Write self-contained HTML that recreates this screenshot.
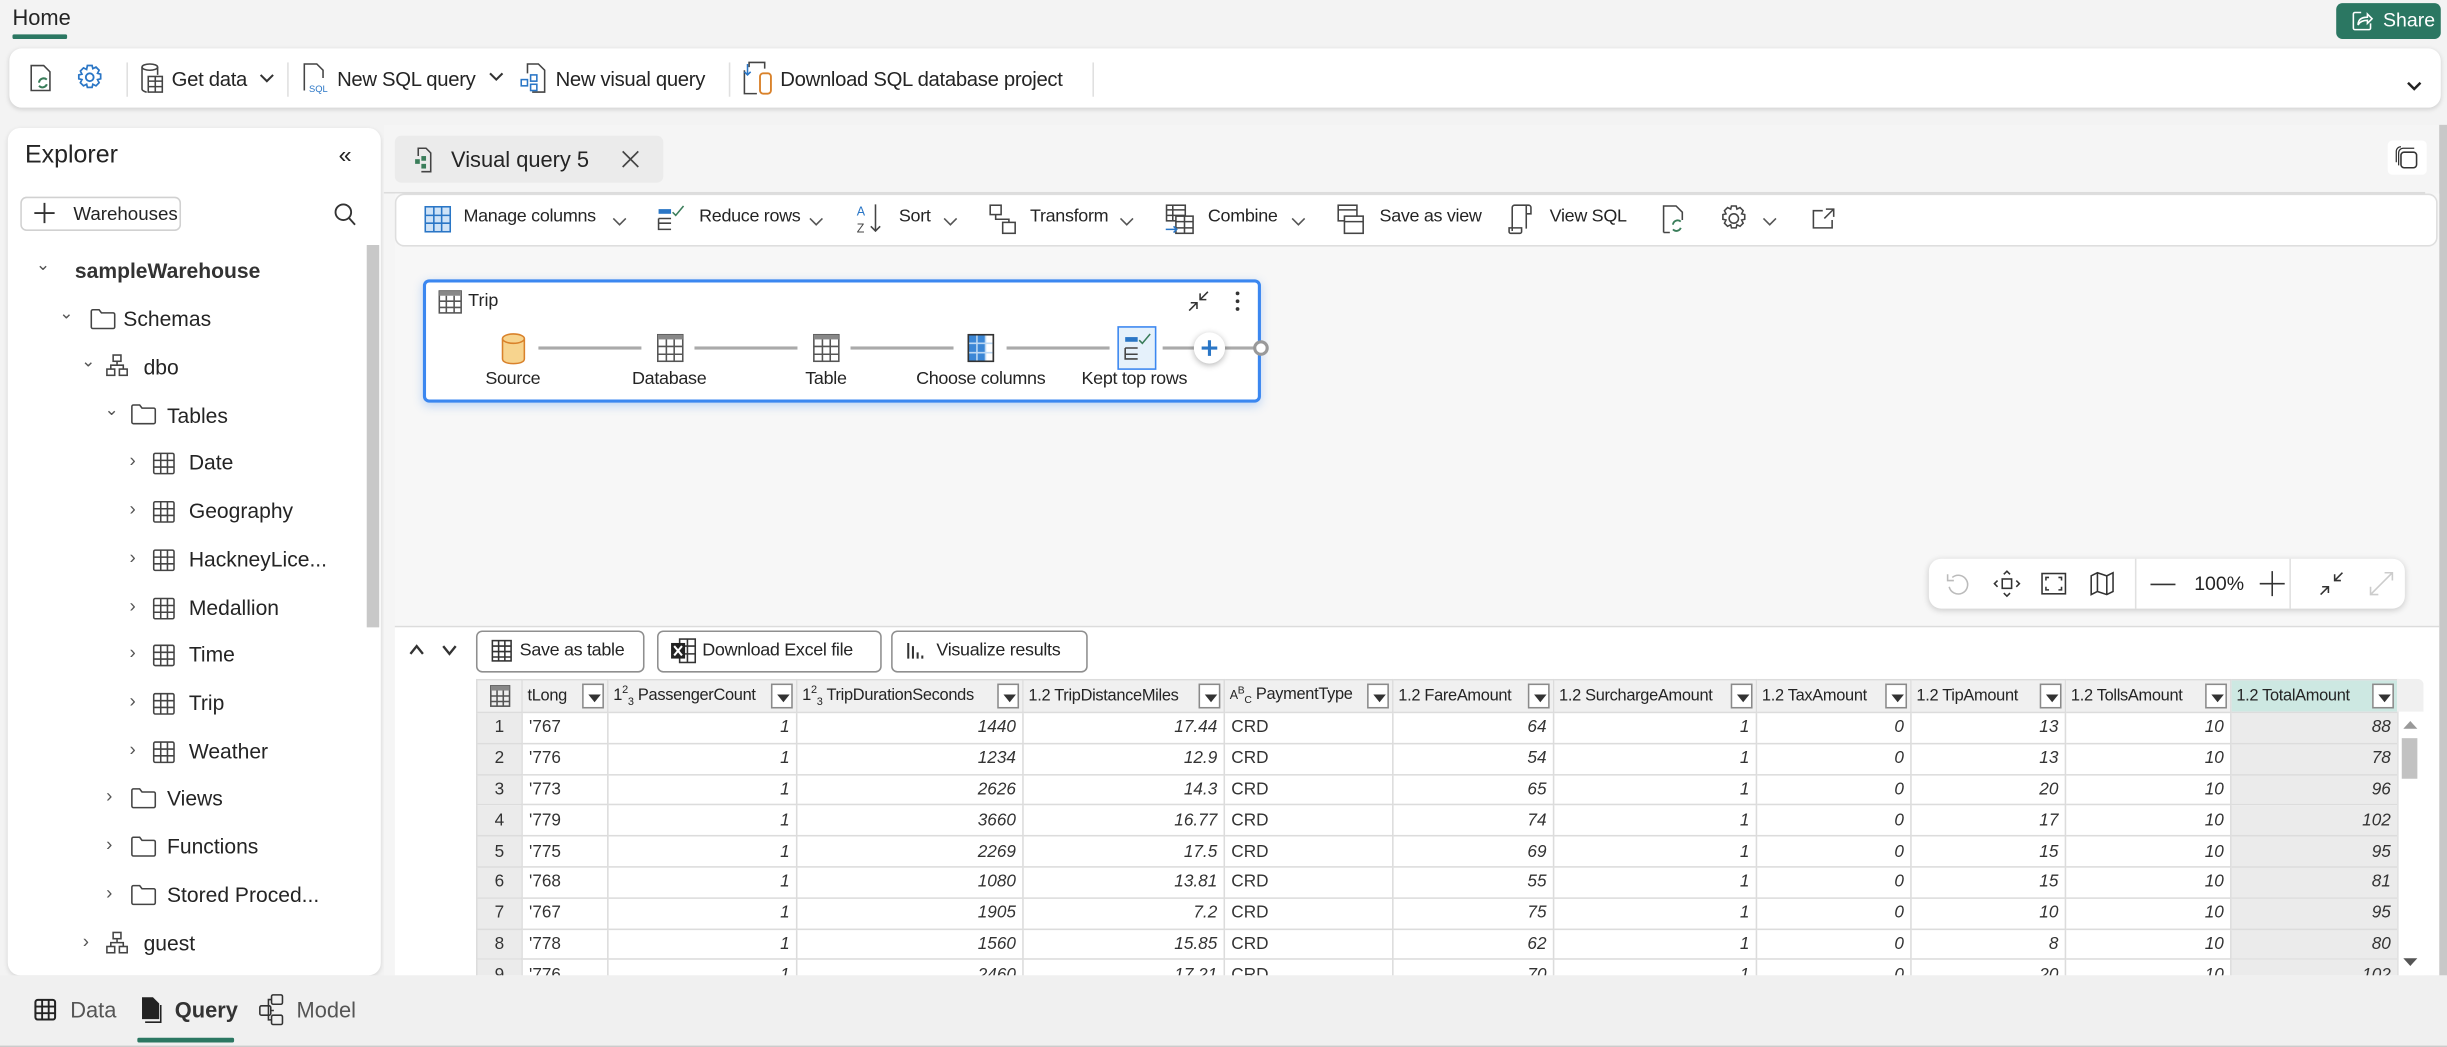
<!DOCTYPE html>
<html><head><meta charset="utf-8">
<style>
*{box-sizing:border-box;margin:0;padding:0}
html,body{width:2447px;height:1047px;overflow:hidden;background:#f3f3f3}
#s{position:absolute;left:0;top:0;width:1568px;height:671px;transform:scale(1.56059);transform-origin:0 0;font-family:"Liberation Sans",sans-serif;color:#242424;background:#f3f3f3}
.a{position:absolute}
.t{position:absolute;white-space:nowrap}
svg{position:absolute;overflow:visible}
.sep{position:absolute;width:1px;background:#e0e0e0}
.tree{font-size:13.5px}
.tb{font-size:13px;letter-spacing:-.2px}
.tb2{font-size:11.5px;letter-spacing:-.2px}
table{border-collapse:collapse;table-layout:fixed;font-size:11px}
td,th{border:1px solid #dcdcdc;height:19.8px;padding:0 4px;white-space:nowrap;overflow:hidden}
th{height:21px;background:#f0f0f0;font-weight:normal;text-align:left;position:relative;padding-left:3px;font-size:10.5px;letter-spacing:-.2px}
td{text-align:right;font-style:italic;color:#333}
td.n{background:#ebebeb;text-align:center;font-style:normal}
td.l{text-align:left;font-style:normal}
td.tot{background:#ebebeb}
.dd{position:absolute;right:2px;top:2px;width:14px;height:16px;border:1px solid #8a8a8a;background:#fff}
.dd:after{content:"";position:absolute;left:3px;top:6px;border-left:4px solid transparent;border-right:4px solid transparent;border-top:5px solid #333}
.btn{position:absolute;border:1px solid #8f8f8f;border-radius:4px;background:#fff;font-size:12px;height:27px;top:404px}
.bt{font-size:11.5px;letter-spacing:-.2px}
</style></head><body><div id="s">

<div class="t" style="left:8px;top:3px;font-size:14px">Home</div>
<div class="a" style="left:8px;top:22px;width:35px;height:2.5px;background:#2b7762;border-radius:1px"></div>
<div class="a" style="left:1497px;top:2px;width:67px;height:23px;background:#2b7762;border-radius:4px"></div>
<svg style="left:1507px;top:7px" width="14" height="13" viewBox="0 0 14 13"><path d="M6 1H2a1 1 0 0 0-1 1v9a1 1 0 0 0 1 1h9a1 1 0 0 0 1-1V8" fill="none" stroke="#fff" stroke-width="1"/><path d="M4 9c0-4 3-5 6-5V2l3 3-3 3V6c-3 0-5 1-6 3z" fill="none" stroke="#fff" stroke-width="1"/></svg>
<div class="t" style="left:1527px;top:6px;font-size:12.5px;color:#fff">Share</div>

<div class="a" style="left:6px;top:31px;width:1558px;height:38px;background:#fff;border-radius:8px;box-shadow:0 1px 3px rgba(0,0,0,.15)"></div>
<svg style="left:19px;top:41px" width="16" height="18" viewBox="0 0 16 18"><path d="M1 1h8l4 4v12H1z" fill="none" stroke="#444"/><path d="M6 12a3 3 0 0 1 5-2M11 13a3 3 0 0 1-5 1" fill="none" stroke="#3a7d5a" stroke-width="1.3"/></svg>
<svg style="left:49px;top:41px" width="17" height="17" viewBox="0 0 17 17"><circle cx="8.5" cy="8.5" r="2.5" fill="none" stroke="#2a76c6" stroke-width="1.2"/><path d="M7 1h3l.5 2 2-1 2 2-1 2 2 .5v3l-2 .5 1 2-2 2-2-1-.5 2H7l-.5-2-2 1-2-2 1-2-2-.5V7l2-.5-1-2 2-2 2 1z" fill="none" stroke="#2a76c6" stroke-width="1.1"/></svg>
<div class="sep" style="left:81px;top:40px;height:22px"></div>
<svg style="left:89px;top:40px" width="16" height="20" viewBox="0 0 16 20"><ellipse cx="7" cy="3" rx="5" ry="2" fill="none" stroke="#444"/><path d="M2 3v14c0 1 2 2 3 2M12 3v5" fill="none" stroke="#444"/><rect x="6" y="9" width="9" height="10" fill="#fff" stroke="#444"/><path d="M6 12h9M6 15.5h9M10.5 9v10" stroke="#444"/></svg>
<div class="t tb" style="left:110px;top:43px">Get data</div>
<svg style="left:166px;top:47px" width="10" height="6"><path d="M1 1l4 4 4-4" fill="none" stroke="#333" stroke-width="1.3"/></svg>
<div class="sep" style="left:184px;top:40px;height:22px"></div>
<svg style="left:193px;top:40px" width="18" height="20" viewBox="0 0 18 20"><path d="M2 18V1h8l4 4v5" fill="none" stroke="#444"/><text x="5" y="19" font-size="6" fill="#2a76c6" font-family="Liberation Sans">SQL</text></svg>
<div class="t tb" style="left:216px;top:43px">New SQL query</div>
<svg style="left:313px;top:46px" width="10" height="6"><path d="M1 1l4 4 4-4" fill="none" stroke="#333" stroke-width="1.3"/></svg>
<svg style="left:333px;top:40px" width="18" height="20" viewBox="0 0 18 20"><path d="M5 7V1h7l4 4v14H8" fill="none" stroke="#444"/><rect x="1" y="11" width="4" height="4" fill="none" stroke="#2a76c6"/><rect x="7" y="8" width="4" height="4" fill="none" stroke="#2a76c6"/><rect x="7" y="14" width="4" height="4" fill="none" stroke="#2a76c6"/></svg>
<div class="t tb" style="left:356px;top:43px">New visual query</div>
<div class="sep" style="left:467px;top:40px;height:22px"></div>
<svg style="left:476px;top:39px" width="20" height="22" viewBox="0 0 20 22"><path d="M4 4V1h10v4" fill="none" stroke="#444"/><path d="M1 6v15h8" fill="none" stroke="#444"/><path d="M3 2v7M1 7l2 2 2-2" fill="none" stroke="#2a76c6"/><rect x="11" y="8" width="7" height="13" rx="2" fill="none" stroke="#d9822b" stroke-width="1.2"/></svg>
<div class="t tb" style="left:500px;top:43px">Download SQL database project</div>
<div class="sep" style="left:700px;top:40px;height:22px"></div>
<svg style="left:1542px;top:52px" width="10" height="6"><path d="M1 1l4 4 4-4" fill="none" stroke="#222" stroke-width="1.6"/></svg>

<div class="a" style="left:5px;top:82px;width:239px;height:543px;background:#fff;border-radius:8px;box-shadow:0 1px 3px rgba(0,0,0,.12)"></div>
<div class="a" style="left:235px;top:157px;width:8px;height:245px;background:#c8c8c8"></div>
<div class="t" style="left:16px;top:91px;font-size:16px">Explorer</div>
<div class="t" style="left:217px;top:91px;font-size:15px">«</div>
<div class="a" style="left:13px;top:126px;width:103px;height:22px;border:1px solid #d1d1d1;border-radius:4px"></div>
<svg style="left:22px;top:130px" width="13" height="13"><path d="M6.5 0v13M0 6.5h13" stroke="#333" stroke-width="1.2"/></svg>
<div class="t" style="left:47px;top:130px;font-size:12px">Warehouses</div>
<svg style="left:214px;top:130px" width="14" height="15"><circle cx="6" cy="6" r="5" fill="none" stroke="#333" stroke-width="1.2"/><path d="M9.5 9.5l4 4.5" stroke="#333" stroke-width="1.2"/></svg>

<div class="tree">
<div class="t" style="left:23px;top:163px;font-size:11px;color:#555">&#8964;</div>
<div class="t" style="left:48px;top:166px;font-weight:bold;color:#333">sampleWarehouse</div>
<div class="t" style="left:38px;top:194px;font-size:11px;color:#555">&#8964;</div>
<svg style="left:58px;top:198px" width="16" height="13"><path d="M.5 1.5a1 1 0 0 1 1-1h4l1.5 2h7.5a1 1 0 0 1 1 1V11.5a1 1 0 0 1-1 1h-13a1 1 0 0 1-1-1z" fill="none" stroke="#444"/></svg>
<div class="t" style="left:79px;top:197px">Schemas</div>
<div class="t" style="left:52px;top:225px;font-size:11px;color:#555">&#8964;</div>
<svg style="left:68px;top:227px" width="14" height="14"><rect x="4.5" y=".5" width="5" height="4" fill="none" stroke="#444"/><rect x=".5" y="9.5" width="5" height="4" fill="none" stroke="#444"/><rect x="8.5" y="9.5" width="5" height="4" fill="none" stroke="#444"/><path d="M7 4.5v2.5M3 9.5V7h8v2.5" fill="none" stroke="#444"/></svg>
<div class="t" style="left:92px;top:228px">dbo</div>
<div class="t" style="left:67px;top:256px;font-size:11px;color:#555">&#8964;</div>
<svg style="left:84px;top:259px" width="16" height="13"><path d="M.5 1.5a1 1 0 0 1 1-1h4l1.5 2h7.5a1 1 0 0 1 1 1V11.5a1 1 0 0 1-1 1h-13a1 1 0 0 1-1-1z" fill="none" stroke="#444"/></svg>
<div class="t" style="left:107px;top:259px">Tables</div>

<div class="t" style="left:83px;top:288px;color:#555;font-size:12px">›</div><svg style="left:98px;top:290px" width="14" height="14"><rect x=".5" y=".5" width="13" height="13" rx="1" fill="none" stroke="#444"/><path d="M.5 5h13M.5 9.3h13M5 .5v13M9.3 .5v13" stroke="#444"/></svg><div class="t" style="left:121px;top:289px">Date</div>
<div class="t" style="left:83px;top:319px;color:#555;font-size:12px">›</div><svg style="left:98px;top:321px" width="14" height="14"><rect x=".5" y=".5" width="13" height="13" rx="1" fill="none" stroke="#444"/><path d="M.5 5h13M.5 9.3h13M5 .5v13M9.3 .5v13" stroke="#444"/></svg><div class="t" style="left:121px;top:320px">Geography</div>
<div class="t" style="left:83px;top:350px;color:#555;font-size:12px">›</div><svg style="left:98px;top:352px" width="14" height="14"><rect x=".5" y=".5" width="13" height="13" rx="1" fill="none" stroke="#444"/><path d="M.5 5h13M.5 9.3h13M5 .5v13M9.3 .5v13" stroke="#444"/></svg><div class="t" style="left:121px;top:351px">HackneyLice...</div>
<div class="t" style="left:83px;top:381px;color:#555;font-size:12px">›</div><svg style="left:98px;top:383px" width="14" height="14"><rect x=".5" y=".5" width="13" height="13" rx="1" fill="none" stroke="#444"/><path d="M.5 5h13M.5 9.3h13M5 .5v13M9.3 .5v13" stroke="#444"/></svg><div class="t" style="left:121px;top:382px">Medallion</div>
<div class="t" style="left:83px;top:411px;color:#555;font-size:12px">›</div><svg style="left:98px;top:413px" width="14" height="14"><rect x=".5" y=".5" width="13" height="13" rx="1" fill="none" stroke="#444"/><path d="M.5 5h13M.5 9.3h13M5 .5v13M9.3 .5v13" stroke="#444"/></svg><div class="t" style="left:121px;top:412px">Time</div>
<div class="t" style="left:83px;top:442px;color:#555;font-size:12px">›</div><svg style="left:98px;top:444px" width="14" height="14"><rect x=".5" y=".5" width="13" height="13" rx="1" fill="none" stroke="#444"/><path d="M.5 5h13M.5 9.3h13M5 .5v13M9.3 .5v13" stroke="#444"/></svg><div class="t" style="left:121px;top:443px">Trip</div>
<div class="t" style="left:83px;top:473px;color:#555;font-size:12px">›</div><svg style="left:98px;top:475px" width="14" height="14"><rect x=".5" y=".5" width="13" height="13" rx="1" fill="none" stroke="#444"/><path d="M.5 5h13M.5 9.3h13M5 .5v13M9.3 .5v13" stroke="#444"/></svg><div class="t" style="left:121px;top:474px">Weather</div>
<div class="t" style="left:68px;top:503px;color:#555;font-size:12px">›</div><svg style="left:84px;top:505px" width="16" height="13"><path d="M.5 1.5a1 1 0 0 1 1-1h4l1.5 2h7.5a1 1 0 0 1 1 1V11.5a1 1 0 0 1-1 1h-13a1 1 0 0 1-1-1z" fill="none" stroke="#444"/></svg><div class="t" style="left:107px;top:504px">Views</div>
<div class="t" style="left:68px;top:534px;color:#555;font-size:12px">›</div><svg style="left:84px;top:536px" width="16" height="13"><path d="M.5 1.5a1 1 0 0 1 1-1h4l1.5 2h7.5a1 1 0 0 1 1 1V11.5a1 1 0 0 1-1 1h-13a1 1 0 0 1-1-1z" fill="none" stroke="#444"/></svg><div class="t" style="left:107px;top:535px">Functions</div>
<div class="t" style="left:68px;top:565px;color:#555;font-size:12px">›</div><svg style="left:84px;top:567px" width="16" height="13"><path d="M.5 1.5a1 1 0 0 1 1-1h4l1.5 2h7.5a1 1 0 0 1 1 1V11.5a1 1 0 0 1-1 1h-13a1 1 0 0 1-1-1z" fill="none" stroke="#444"/></svg><div class="t" style="left:107px;top:566px">Stored Proced...</div>
<div class="t" style="left:53px;top:596px;color:#555;font-size:12px">›</div><svg style="left:68px;top:597px" width="14" height="14"><rect x="4.5" y=".5" width="5" height="4" fill="none" stroke="#444"/><rect x=".5" y="9.5" width="5" height="4" fill="none" stroke="#444"/><rect x="8.5" y="9.5" width="5" height="4" fill="none" stroke="#444"/><path d="M7 4.5v2.5M3 9.5V7h8v2.5" fill="none" stroke="#444"/></svg><div class="t" style="left:92px;top:597px">guest</div>
</div>

<div class="a" style="left:246px;top:80px;width:1322px;height:545px;background:#f5f5f5"></div>
<div class="a" style="left:253px;top:87px;width:172px;height:30px;background:#ebebeb;border-radius:4px"></div>
<svg style="left:265px;top:94px" width="12" height="17" viewBox="0 0 12 17"><path d="M3 6V1h5l3 3v12H5" fill="none" stroke="#444"/><rect x="1" y="8" width="3" height="3" fill="#3a7d5a"/><rect x="5" y="6" width="3" height="3" fill="#3a7d5a"/><rect x="5" y="11" width="3" height="3" fill="#3a7d5a"/></svg>
<div class="t" style="left:289px;top:94px;font-size:14px">Visual query 5</div>
<svg style="left:398px;top:96px" width="12" height="12"><path d="M1 1l10 10M11 1L1 11" stroke="#444" stroke-width="1.1"/></svg>
<div class="a" style="left:1530px;top:90px;width:25px;height:22px;background:#fff;border-radius:3px"></div>
<svg style="left:1534px;top:93px" width="16" height="16"><rect x="4.5" y="4.5" width="10" height="10" rx="2" fill="none" stroke="#333"/><path d="M3 13V5a3 3 0 0 1 3-3h7M1.5 11V4a3 3 0 0 1 3-3" fill="none" stroke="#333" stroke-width=".8"/></svg>
<div class="a" style="left:246px;top:123px;width:1308px;height:1px;background:#dcdcdc"></div>
<div class="a" style="left:1563px;top:80px;width:5px;height:545px;background:#c8c8c8"></div>

<div class="a" style="left:253px;top:124px;width:1310px;height:278px;background:#f7f7f7"></div>
<div class="a" style="left:253px;top:124px;width:1309px;height:34px;background:#fff;border:1px solid #dedede;border-radius:6px"></div>
<svg style="left:272px;top:132px" width="17" height="17"><rect x=".5" y=".5" width="16" height="16" fill="#cfe3f7" stroke="#2a76c6"/><path d="M.5 6h16M.5 11h16M6 .5v16M11 .5v16" stroke="#2a76c6"/></svg>
<div class="t tb2" style="left:297px;top:133px">Manage columns</div>
<svg style="left:392px;top:139px" width="10" height="6"><path d="M1 1l4 4 4-4" fill="none" stroke="#555"/></svg>
<svg style="left:421px;top:131px" width="18" height="18"><rect x="1" y="3" width="8" height="3" fill="#2a76c6"/><path d="M1 9h8M1 12h8M1 9v7h8" fill="none" stroke="#444"/><path d="M10 5l2 2 5-6" fill="none" stroke="#3a7d5a"/></svg>
<div class="t tb2" style="left:448px;top:133px">Reduce rows</div>
<svg style="left:518px;top:139px" width="10" height="6"><path d="M1 1l4 4 4-4" fill="none" stroke="#555"/></svg>
<svg style="left:549px;top:130px" width="18" height="20"><text x="0" y="8" font-size="8" fill="#2a76c6" font-family="Liberation Sans">A</text><text x="0" y="19" font-size="8" fill="#444" font-family="Liberation Sans">Z</text><path d="M12 1v17M9 15l3 3 3-3" fill="none" stroke="#444"/></svg>
<div class="t tb2" style="left:576px;top:133px">Sort</div>
<svg style="left:604px;top:139px" width="10" height="6"><path d="M1 1l4 4 4-4" fill="none" stroke="#555"/></svg>
<svg style="left:634px;top:131px" width="18" height="19"><rect x=".5" y=".5" width="7" height="6" fill="none" stroke="#444"/><rect x="8.5" y="11.5" width="8" height="7" fill="none" stroke="#444"/><path d="M4 6.5v3h8.5v2" fill="none" stroke="#444"/></svg>
<div class="t tb2" style="left:660px;top:133px">Transform</div>
<svg style="left:717px;top:139px" width="10" height="6"><path d="M1 1l4 4 4-4" fill="none" stroke="#555"/></svg>
<svg style="left:747px;top:131px" width="19" height="20"><rect x=".5" y=".5" width="12" height="10" fill="none" stroke="#444"/><path d="M.5 3.5h12M.5 7h12M4.5 .5v10" stroke="#444"/><rect x="6.5" y="7.5" width="11" height="11" fill="#fff" stroke="#444"/><path d="M6.5 11h11M6.5 15h11M12 7.5v11" stroke="#444"/><path d="M0 16h7M5 14l2 2-2 2" fill="none" stroke="#2a76c6"/></svg>
<div class="t tb2" style="left:774px;top:133px">Combine</div>
<svg style="left:827px;top:139px" width="10" height="6"><path d="M1 1l4 4 4-4" fill="none" stroke="#555"/></svg>
<svg style="left:857px;top:131px" width="18" height="19"><rect x=".5" y=".5" width="12" height="10" fill="none" stroke="#444"/><path d="M.5 3.5h12" stroke="#444"/><rect x="4.5" y="7.5" width="12" height="11" fill="#fff" stroke="#444"/><path d="M4.5 11h12" stroke="#444"/></svg>
<div class="t tb2" style="left:884px;top:133px">Save as view</div>
<svg style="left:966px;top:131px" width="16" height="19"><path d="M3 17V2a1.5 1.5 0 0 1 1.5-1.5h9A1.5 1.5 0 0 1 15 2v4h-3M1 15h8v2.5a1 1 0 0 1-1 1H2a1 1 0 0 1-1-1z" fill="none" stroke="#444"/><path d="M12 .5v15" stroke="#444"/></svg>
<div class="t tb2" style="left:993px;top:133px">View SQL</div>
<svg style="left:1065px;top:131px" width="16" height="19"><path d="M1 18V1h8l4 4v5M1 18h4" fill="none" stroke="#444"/><path d="M7 13a3 3 0 0 1 5-2M12 15a3 3 0 0 1-5 1" fill="none" stroke="#3a7d5a" stroke-width="1.2"/></svg>
<svg style="left:1102px;top:131px" width="18" height="18"><circle cx="9" cy="9" r="3" fill="none" stroke="#444"/><path d="M7.5 1h3l.5 2 2-1 2 2-1 2 2 .5v3l-2 .5 1 2-2 2-2-1-.5 2h-3l-.5-2-2 1-2-2 1-2-2-.5v-3l2-.5-1-2 2-2 2 1z" fill="none" stroke="#444"/></svg>
<svg style="left:1129px;top:139px" width="10" height="6"><path d="M1 1l4 4 4-4" fill="none" stroke="#555"/></svg>
<svg style="left:1161px;top:133px" width="15" height="14"><path d="M7 2H1v11h12V8M9 1h5v5M14 1L8 7" fill="none" stroke="#444"/></svg>

<div class="a" style="left:271px;top:179px;width:537px;height:79px;background:#fff;border:2px solid #3b87f0;border-radius:4px;box-shadow:0 2px 6px rgba(59,135,240,.3)"></div>
<svg style="left:281px;top:186px" width="15" height="15"><rect x=".5" y=".5" width="14" height="14" fill="none" stroke="#555"/><rect x=".5" y=".5" width="14" height="3" fill="#888"/><path d="M.5 7h14M.5 11h14M5 3.5v11M10 3.5v11" stroke="#555"/></svg>
<div class="t" style="left:300px;top:187px;font-size:11.5px">Trip</div>
<svg style="left:761px;top:186px" width="14" height="14"><path d="M1 13l5-5M2 8h4v4M13 1L8 6M8 2v4h4" fill="none" stroke="#333"/></svg>
<svg style="left:791px;top:186px" width="4" height="14"><circle cx="2" cy="2" r="1.2" fill="#333"/><circle cx="2" cy="7" r="1.2" fill="#333"/><circle cx="2" cy="12" r="1.2" fill="#333"/></svg>
<div class="a" style="left:345px;top:222px;width:66px;height:1.5px;background:#aaa"></div>
<div class="a" style="left:445px;top:222px;width:66px;height:1.5px;background:#aaa"></div>
<div class="a" style="left:545px;top:222px;width:66px;height:1.5px;background:#aaa"></div>
<div class="a" style="left:645px;top:222px;width:66px;height:1.5px;background:#aaa"></div>
<div class="a" style="left:745px;top:222px;width:60px;height:1.5px;background:#aaa"></div>
<svg style="left:321px;top:213px" width="16" height="21"><path d="M1 4v13c0 2 3 3 7 3s7-1 7-3V4" fill="#f7d48e" stroke="#d9822b"/><ellipse cx="8" cy="4" rx="7" ry="3" fill="#f7d48e" stroke="#d9822b"/></svg>
<svg style="left:421px;top:214px" width="17" height="18"><rect x=".5" y=".5" width="16" height="17" fill="#fff" stroke="#555"/><rect x=".5" y=".5" width="16" height="3" fill="#888"/><path d="M.5 8h16M.5 13h16M6 3.5v14M11 3.5v14" stroke="#555"/></svg>
<svg style="left:521px;top:214px" width="17" height="18"><rect x=".5" y=".5" width="16" height="17" fill="#fff" stroke="#555"/><rect x=".5" y=".5" width="16" height="3" fill="#888"/><path d="M.5 8h16M.5 13h16M6 3.5v14M11 3.5v14" stroke="#555"/></svg>
<svg style="left:620px;top:214px" width="17" height="18"><rect x=".5" y=".5" width="16" height="17" fill="#fff" stroke="#333"/><rect x=".5" y=".5" width="11" height="17" fill="#3b87d6"/><path d="M.5 6h16M.5 12h16M6 .5v17M11.5 .5v17" stroke="#bcd8f3"/><rect x=".5" y=".5" width="16" height="17" fill="none" stroke="#333"/></svg>
<div class="a" style="left:716px;top:209px;width:25px;height:28px;background:#e5f1fb;border:1px solid #3b87f0"></div>
<svg style="left:720px;top:212px" width="18" height="20"><rect x="1" y="4" width="8" height="3" fill="#2a76c6"/><path d="M1 11h8M1 15h8M1 11v7h8" fill="none" stroke="#444"/><path d="M10 6l2 2 5-6" fill="none" stroke="#3a7d5a"/></svg>
<div class="a" style="left:765px;top:213px;width:20px;height:20px;border-radius:50%;background:#fff;box-shadow:0 1px 4px rgba(0,0,0,.3)"></div>
<svg style="left:769px;top:217px" width="12" height="12"><path d="M6 1v10M1 6h10" stroke="#2a76c6" stroke-width="2"/></svg>
<div class="a" style="left:803px;top:218px;width:10px;height:10px;border-radius:50%;background:#fff;border:2px solid #999"></div>
<div class="t tb2" style="left:311px;top:237px">Source</div>
<div class="t tb2" style="left:405px;top:237px">Database</div>
<div class="t tb2" style="left:516px;top:237px">Table</div>
<div class="t tb2" style="left:587px;top:237px">Choose columns</div>
<div class="t tb2" style="left:693px;top:237px">Kept top rows</div>

<div class="a" style="left:1236px;top:358px;width:305px;height:32px;background:#fff;border-radius:8px;box-shadow:0 1px 4px rgba(0,0,0,.18)"></div>
<svg style="left:1247px;top:367px" width="14" height="14"><path d="M4 3a6 6 0 1 1-2 6M1 1v4h4" fill="none" stroke="#bbb"/></svg>
<svg style="left:1278px;top:366px" width="16" height="16"><rect x="5" y="5" width="6" height="6" fill="none" stroke="#333"/><path d="M6 2l2-2 2 2M6 14l2 2 2-2M2 6L0 8l2 2M14 6l2 2-2 2" fill="none" stroke="#333"/></svg>
<svg style="left:1308px;top:367px" width="16" height="14"><rect x=".5" y=".5" width="15" height="13" fill="none" stroke="#333"/><path d="M3 5V3h2M11 3h2v2M13 9v2h-2M5 11H3V9" fill="none" stroke="#333"/></svg>
<svg style="left:1339px;top:366px" width="16" height="16"><path d="M1 3l4-2 6 2 4-2v12l-4 2-6-2-4 2zM5 1v12M11 3v12" fill="none" stroke="#333"/></svg>
<div class="sep" style="left:1368px;top:358px;height:32px"></div>
<svg style="left:1378px;top:374px" width="16" height="2"><path d="M0 .5h16" stroke="#333"/></svg>
<div class="t" style="left:1406px;top:367px;font-size:12.5px">100%</div>
<svg style="left:1448px;top:366px" width="16" height="16"><path d="M8 0v16M0 8h16" stroke="#333"/></svg>
<div class="sep" style="left:1467px;top:358px;height:32px"></div>
<svg style="left:1486px;top:366px" width="16" height="16"><path d="M1 15l5-5M2 10h4v4M15 1l-5 5M10 2v4h4" fill="none" stroke="#333"/></svg>
<svg style="left:1518px;top:366px" width="16" height="16"><path d="M1 15l14-14M1 10v5h5M10 1h5v5" fill="none" stroke="#ccc"/></svg>

<div class="a" style="left:253px;top:401px;width:1310px;height:1px;background:#dcdcdc"></div>
<div class="a" style="left:253px;top:402px;width:1310px;height:223px;background:#fff"></div>
<svg style="left:262px;top:412px" width="32" height="8"><path d="M1 7l4-5 4 5M22 2l4 5 4-5" fill="none" stroke="#333" stroke-width="1.5"/></svg>
<div class="btn" style="left:305px;width:108px"></div>
<svg style="left:315px;top:410px" width="13" height="14"><rect x=".5" y=".5" width="12" height="13" fill="none" stroke="#333"/><path d="M.5 4h12M.5 7.5h12M.5 11h12M4.5 .5v13M8.5 .5v13" stroke="#333"/></svg>
<div class="t bt" style="left:333px;top:411px">Save as table</div>
<div class="btn" style="left:421px;width:144px"></div>
<svg style="left:430px;top:409px" width="16" height="16"><rect x="5.5" y=".5" width="10" height="15" fill="#fff" stroke="#333"/><path d="M5.5 5h10M5.5 10h10M10.5 .5v15" stroke="#333"/><rect x="0" y="3" width="9" height="10" fill="#222"/><path d="M2 5l5 6M7 5l-5 6" stroke="#fff" stroke-width="1.3"/></svg>
<div class="t bt" style="left:450px;top:411px">Download Excel file</div>
<div class="btn" style="left:571px;width:126px"></div>
<svg style="left:581px;top:411px" width="12" height="12"><path d="M1 1v10M4 3v8M7 7v4M10 9v2" stroke="#333" stroke-width="1.3"/></svg>
<div class="t bt" style="left:600px;top:411px">Visualize results</div>

<div class="a" style="left:305px;top:435px;width:1248px;height:190px;overflow:hidden;border-top-right-radius:4px">
<table style="width:1231px">
<colgroup><col style="width:29px"><col style="width:55px"><col style="width:121px"><col style="width:145px"><col style="width:129px"><col style="width:108px"><col style="width:103px"><col style="width:130px"><col style="width:99px"><col style="width:99px"><col style="width:106px"><col style="width:107px"></colgroup>
<tr><th><svg style="left:8px;top:3px" width="13" height="14"><rect x=".5" y=".5" width="12" height="13" fill="none" stroke="#555"/><rect x=".5" y=".5" width="12" height="3" fill="#888"/><path d="M.5 7h12M.5 10.5h12M4.5 3.5v10M8.5 3.5v10" stroke="#555"/></svg></th>
<th>tLong<span class="dd"></span></th>
<th>1<sup style="font-size:7px">2</sup><sub style="font-size:7px">3</sub> PassengerCount<span class="dd"></span></th>
<th>1<sup style="font-size:7px">2</sup><sub style="font-size:7px">3</sub> TripDurationSeconds<span class="dd"></span></th>
<th>1.2 TripDistanceMiles<span class="dd"></span></th>
<th><span style="font-size:8px">A<sup>B</sup><sub>C</sub></span> PaymentType<span class="dd"></span></th>
<th>1.2 FareAmount<span class="dd"></span></th>
<th>1.2 SurchargeAmount<span class="dd"></span></th>
<th>1.2 TaxAmount<span class="dd"></span></th>
<th>1.2 TipAmount<span class="dd"></span></th>
<th>1.2 TollsAmount<span class="dd"></span></th>
<th style="background:#cde8e2">1.2 TotalAmount<span class="dd"></span></th></tr>
<tr><td class="n">1</td><td class="l">'767</td><td>1</td><td>1440</td><td>17.44</td><td class="l">CRD</td><td>64</td><td>1</td><td>0</td><td>13</td><td>10</td><td class="tot">88</td></tr>
<tr><td class="n">2</td><td class="l">'776</td><td>1</td><td>1234</td><td>12.9</td><td class="l">CRD</td><td>54</td><td>1</td><td>0</td><td>13</td><td>10</td><td class="tot">78</td></tr>
<tr><td class="n">3</td><td class="l">'773</td><td>1</td><td>2626</td><td>14.3</td><td class="l">CRD</td><td>65</td><td>1</td><td>0</td><td>20</td><td>10</td><td class="tot">96</td></tr>
<tr><td class="n">4</td><td class="l">'779</td><td>1</td><td>3660</td><td>16.77</td><td class="l">CRD</td><td>74</td><td>1</td><td>0</td><td>17</td><td>10</td><td class="tot">102</td></tr>
<tr><td class="n">5</td><td class="l">'775</td><td>1</td><td>2269</td><td>17.5</td><td class="l">CRD</td><td>69</td><td>1</td><td>0</td><td>15</td><td>10</td><td class="tot">95</td></tr>
<tr><td class="n">6</td><td class="l">'768</td><td>1</td><td>1080</td><td>13.81</td><td class="l">CRD</td><td>55</td><td>1</td><td>0</td><td>15</td><td>10</td><td class="tot">81</td></tr>
<tr><td class="n">7</td><td class="l">'767</td><td>1</td><td>1905</td><td>7.2</td><td class="l">CRD</td><td>75</td><td>1</td><td>0</td><td>10</td><td>10</td><td class="tot">95</td></tr>
<tr><td class="n">8</td><td class="l">'778</td><td>1</td><td>1560</td><td>15.85</td><td class="l">CRD</td><td>62</td><td>1</td><td>0</td><td>8</td><td>10</td><td class="tot">80</td></tr>
<tr><td class="n">9</td><td class="l">'776</td><td>1</td><td>2460</td><td>17.21</td><td class="l">CRD</td><td>70</td><td>1</td><td>0</td><td>20</td><td>10</td><td class="tot">102</td></tr>
</table>
<div class="a" style="left:1231px;top:0;width:17px;height:190px;background:#fff;border-left:1px solid #e0e0e0"></div>
<div class="a" style="left:1231px;top:0;width:17px;height:21px;background:#f0f0f0"></div>
<svg style="left:1235px;top:26px" width="9" height="6"><path d="M0 6l4.5-5 4.5 5z" fill="#999"/></svg>
<div class="a" style="left:1234px;top:38px;width:10px;height:26px;background:#c2c2c2"></div>
<svg style="left:1235px;top:179px" width="9" height="6"><path d="M0 0l4.5 5 4.5-5z" fill="#555"/></svg>
</div>

<div class="a" style="left:0;top:625px;width:1568px;height:46px;background:#f0f0f0;border-bottom:1px solid #ccc"></div>
<svg style="left:22px;top:640px" width="14" height="14"><rect x=".7" y=".7" width="12.6" height="12.6" rx="1.5" fill="none" stroke="#222" stroke-width="1.3"/><path d="M.7 5h12.6M.7 9.2h12.6M5 .7v12.6M9.2 .7v12.6" stroke="#222" stroke-width="1.2"/></svg>
<div class="t" style="left:45px;top:639px;font-size:14px;color:#555">Data</div>
<svg style="left:90px;top:638px" width="14" height="18"><path d="M1 1h7l4 4v10H1z" fill="#222"/><path d="M3 17h10V6" fill="none" stroke="#222"/></svg>
<div class="t" style="left:112px;top:639px;font-size:14px;font-weight:bold;color:#333">Query</div>
<div class="a" style="left:88px;top:665px;width:62px;height:2.5px;background:#2b7762;border-radius:1px"></div>
<svg style="left:166px;top:637px" width="20" height="20"><rect x="8" y=".5" width="7" height="6" rx="1" fill="none" stroke="#333"/><rect x=".5" y="7.5" width="7" height="6" rx="1" fill="none" stroke="#333"/><rect x="8" y="13.5" width="7" height="6" rx="1" fill="none" stroke="#333"/><path d="M7.5 10.5h2M8 3.5h-2v13h2" fill="none" stroke="#333"/></svg>
<div class="t" style="left:190px;top:639px;font-size:14px;color:#555">Model</div>

</div></body></html>
